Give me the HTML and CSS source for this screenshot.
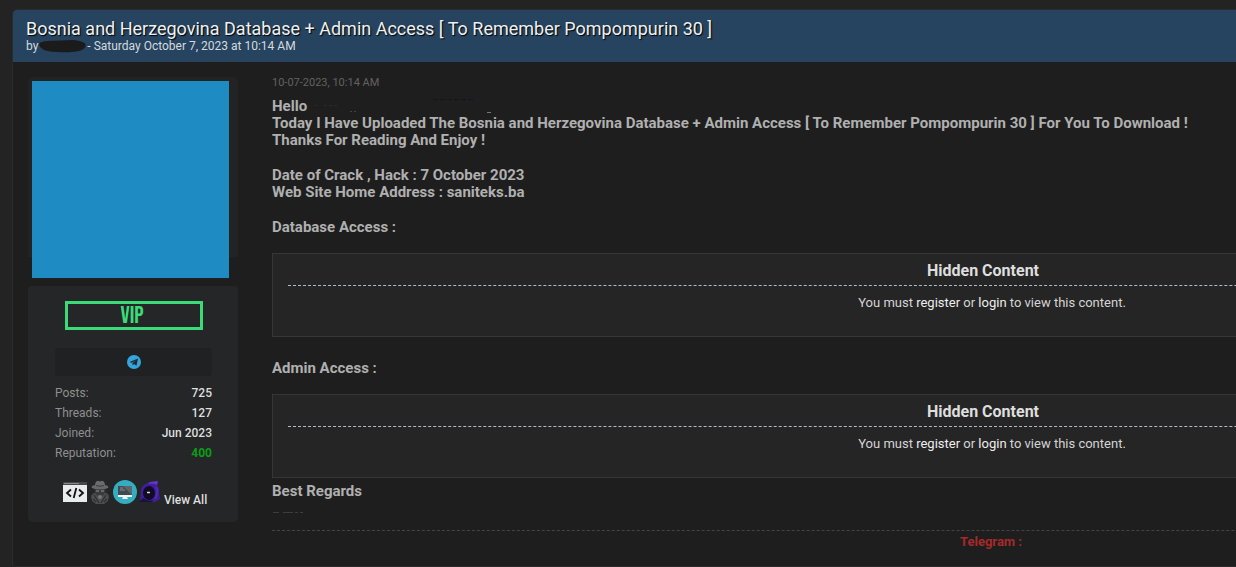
FILE: index.html
```html
<!DOCTYPE html>
<html lang="en">
<head>
<meta charset="utf-8">
<title>Bosnia and Herzegovina Database + Admin Access</title>
<link rel="stylesheet" href="styles.css">
</head>
<body>
<main class="thread">
  <header class="thread-head">
    <h1 class="thread-title">Bosnia and Herzegovina Database + Admin Access [ To Remember Pompompurin 30 ]</h1>
    <p class="byline">by<svg class="scribble" viewBox="0 0 54 15" preserveAspectRatio="none" aria-hidden="true"><path d="M2 4Q8 1 18 2L38 1Q50 2 52 5Q54 9 48 12Q38 15 22 14Q8 14 4 10Q0 7 2 4Z" fill="#1b1b1b"/></svg>- Saturday October 7, 2023 at 10:14 AM</p>
  </header>
  <article class="post">
    <aside class="author">
      <div class="avatar-card"><div class="avatar"></div></div>
      <div class="author-card">
        <div class="rank">VIP</div>
        <a class="contact" href="#" aria-label="Telegram">
          <svg class="contact-icon" viewBox="0 0 14 14"><circle cx="7" cy="7" r="7" fill="#36a5dc"/><path d="M2.5 7L11 3.5L9.5 10.8L7 9L5.7 10.4L5.4 8.1L9 5.2L4.7 7.8Z" fill="#202c35"/></svg>
        </a>
        <dl class="stats">
          <div class="stat"><dt>Posts:</dt><dd>725</dd></div>
          <div class="stat"><dt>Threads:</dt><dd>127</dd></div>
          <div class="stat"><dt>Joined:</dt><dd>Jun 2023</dd></div>
          <div class="stat"><dt>Reputation:</dt><dd class="rep">400</dd></div>
        </dl>
        <div class="awards">
          <svg class="award" viewBox="0 0 24 24"><rect y="2" width="24" height="20" fill="#e9ecec"/><path d="M0 2H24V5H0Z" fill="#46484a"/><path d="M1 3.500H16" stroke="#85888a"/><path d="M8 9.500L4 13L8 16.500M16 9.500L20 13L16 16.500M13.300 8L10.700 18" fill="none" stroke="#111" stroke-width="1.800"/></svg>
          <svg class="award" viewBox="0 0 24 24"><path d="M3 16Q7 11 12 12Q18 11 21 16L20 21L16 24H8L4 21Z" fill="#4d4e50"/><ellipse cx="12" cy="10.500" rx="5.500" ry="5.500" fill="#3a3b3d"/><path d="M7 6Q7 1 10 .8L12 1.500L14 .8Q17 1 17 6Z" fill="#6c6d6f"/><ellipse cx="12" cy="7" rx="8.500" ry="2.300" fill="#66686a"/><path d="M8 5.500Q12 7 16 5.500" fill="none" stroke="#3e3f41"/><path d="M8 11H11M13 11H16" stroke="#777" stroke-width="1.300"/><path d="M6 15L11 23M18 15L13 23M5 19L8 22M19 19L16 22" stroke="#303133" stroke-width="1.300"/><circle cx="12" cy="17" r="2" fill="#77787a"/></svg>
          <svg class="award" viewBox="0 0 24 24"><circle cx="12" cy="12" r="12" fill="#35adc0"/><rect x="5" y="6" width="14" height="9" fill="#414a50"/><path d="M10 6H19V15Z" fill="#5d666b"/><path d="M7 8H10M7 10H12" stroke="#859298"/><path d="M5 15H19V17H14L15 19H9L10 17H5Z" fill="#f0f5f5"/></svg>
          <svg class="award" viewBox="0 0 24 24"><path d="M2 22L3 9Q5 4 12 2L20 1L19 5Q22 8 21 14L22 19L17 22Z" fill="#3f1e98"/><path d="M12 2L20 1L19 5Q15 3 10 4Z" fill="#6238c6"/><path d="M18 7Q21 12 17 19" stroke="#5029ae" stroke-width="2" fill="none"/><ellipse cx="11" cy="13" rx="6" ry="7" fill="#110b25"/><path d="M1 22L5 18Q10 22 15 20L14 22Z" fill="#1b103e"/><path d="M9 12.500H12" stroke="#ddd" stroke-width="1.500"/></svg>
          <a class="view-all" href="#">View All</a>
        </div>
      </div>
    </aside>
    <div class="content">
      <time class="date">10-07-2023, 10:14 AM</time>
      <div class="message">
        <p>Hello<svg class="erased" viewBox="0 0 200 16" aria-hidden="true"><path d="M8 7.500H12M17 7.500H30" stroke="#2a2a2a" stroke-dasharray="3 2"/><path d="M43 13.500H51" stroke="#404040" stroke-dasharray="2 2"/><path d="M126 1.500H168" stroke="#131320" stroke-dasharray="5 2"/><path d="M180 14.500H184" stroke="#777"/></svg><br>Today I Have Uploaded The Bosnia and Herzegovina Database + Admin Access [ To Remember Pompompurin 30 ] For You To Download !<br>Thanks For Reading And Enjoy !</p>
        <p>Date of Crack , Hack : 7 October 2023<br>Web Site Home Address : saniteks.ba</p>
        <p>Database Access :</p>
        <section class="hidden-box">
          <h2 class="hidden-title">Hidden Content</h2>
          <p class="hidden-text">You must <a href="#">register</a> or <a href="#">login</a> to view this content.</p>
        </section>
        <p>Admin Access :</p>
        <section class="hidden-box">
          <h2 class="hidden-title">Hidden Content</h2>
          <p class="hidden-text">You must <a href="#">register</a> or <a href="#">login</a> to view this content.</p>
        </section>
        <p class="closing">Best Regards</p>
        <svg class="erased-name" viewBox="0 0 34 4" aria-hidden="true"><path d="M1 1.500H7M11 1.500H21M23 1.500H26M28 1.500H31" stroke="#3c3c3c"/></svg>
      </div>
      <footer class="signature">Telegram :</footer>
    </div>
  </article>
</main>
</body>
</html>
```
FILE: styles.css
```css
* { box-sizing: border-box; }
html { background: #232323; }
body {
  margin: 0;
  padding: 9px 0 0 12px;
  overflow: hidden;
  font-family: Roboto, "Liberation Sans", sans-serif;
  font-size: 12px;
  color: #b0b0b0;
}
h1, h2, p, dl, dd { margin: 0; }
a { color: inherit; text-decoration: none; }
svg { flex: none; }

/* The thread is wider than the window and runs off its right edge. */
.thread {
  min-height: calc(100vh - 9px);
  margin-right: -474px;
  background: #1e1e1e;
  border: 1px solid #2b2b2b;
  border-radius: 5px 5px 0 0;
}
.thread-head {
  padding: 8px 13px;
  background: #26435f;
  border-radius: 4px 4px 0 0;
  color: #d4dade;
}
.thread-title {
  font-size: 18px;
  line-height: 21px;
  font-weight: 400;
  color: #eef1f3;
  text-shadow: 1px 1px 1px #000;
}
.byline {
  display: flex;
  align-items: center;
  padding-bottom: 1px;
  line-height: 14px;
}
.scribble { width: 49px; height: 14px; }

.post {
  display: flex;
  gap: 34px;
  padding: 15px;
}
.author { flex: none; width: 210px; }
.avatar-card {
  height: 180px;
  padding: 4px;
  background: #232323;
  border-radius: 5px 5px 0 0;
}
.avatar { width: 197px; height: 197px; background: #1f8bc3; }
.author-card {
  margin-top: 29px;
  padding: 15px 26px 15px 27px;
  background: #242628;
  border-radius: 3px 3px 5px 5px;
}
.rank {
  margin: 0 9px 0 10px;
  padding-right: 4px;
  border: 3px solid #3bdc78;
  font-family: "Bebas Neue", "Roboto Condensed", "Open Sans Condensed", Roboto, sans-serif;
  font-size: 24px;
  line-height: 23px;
  font-weight: 500;
  font-stretch: condensed;
  text-align: center;
  color: #3bdc78;
}
.contact {
  display: flex;
  align-items: center;
  justify-content: center;
  height: 28px;
  margin: 18px 0 7px;
  background: #202123;
  border-radius: 4px;
}
.contact-icon { width: 14px; height: 14px; }
.stat {
  display: flex;
  justify-content: space-between;
  line-height: 20px;
}
.stat dt { color: #8f8f8f; }
.stat dd { font-weight: 500; color: #dedede; }
.stat .rep { font-weight: 700; color: #0d9c16; }
.awards {
  display: flex;
  padding: 17px 8px 3px;
}
.award { width: 24px; height: 24px; }
.award + .award { margin-left: 1px; }
.view-all {
  align-self: flex-end;
  padding-left: 2px;
  font-weight: 500;
  line-height: 14px;
  margin-bottom: -3px;
  color: #dedede;
  white-space: nowrap;
}

.content { flex: 1; min-width: 0; }
.date {
  display: block;
  padding-bottom: 10px;
  font-size: 11px;
  line-height: 11px;
  color: #626262;
}
.message {
  font-size: 15px;
  line-height: 17px;
  font-weight: 700;
}
.message p + p { margin-top: 18px; }
.erased { width: 200px; height: 16px; vertical-align: top; }
.hidden-box {
  margin: 17px 0 23px;
  padding: 7px 15px 24px;
  background: #252525;
  border: 1px solid #363636;
  text-align: center;
}
.hidden-title {
  padding-bottom: 5px;
  border-bottom: 1px dashed #aebdc3;
  font-size: 16px;
  line-height: 19px;
  font-weight: 700;
  color: #dedede;
}
.message .hidden-text {
  margin-top: 8px;
  padding-left: 18px;
  font-size: 13px;
  line-height: 18px;
  font-weight: 400;
  color: #d4d4d4;
}
.hidden-text a { color: #eee; }
.message .closing { margin-top: -18px; }
.erased-name { display: block; width: 34px; height: 4px; margin-top: 11px; }
.signature {
  margin-top: 15px;
  padding: 2px 0 0 16px;
  border-top: 1px dashed #444;
  font-size: 13px;
  line-height: 18px;
  font-weight: 700;
  text-align: center;
  color: #a52a2a;
}
```
